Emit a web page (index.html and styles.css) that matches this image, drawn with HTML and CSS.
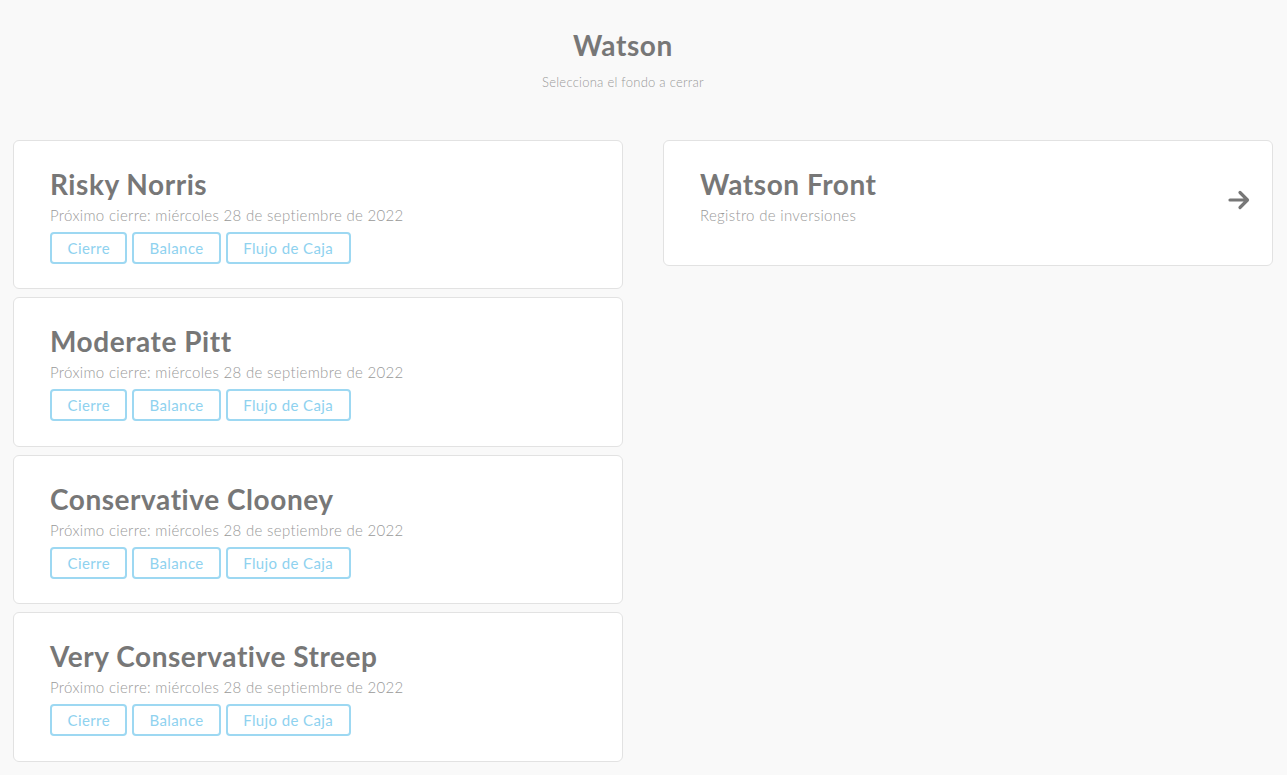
FILE: index.html
```html
<!DOCTYPE html>
<html lang="es">
<head>
<meta charset="utf-8">
<title>Watson</title>
<link rel="stylesheet" href="styles.css">
</head>
<body>
<header class="header">
  <h1 class="header-title">Watson</h1>
  <p class="header-sub">Selecciona el fondo a cerrar</p>
</header>
<main class="grid">
  <section class="column">
    <div class="card">
      <h2 class="card-title">Risky Norris</h2>
      <p class="card-sub">Próximo cierre: miércoles 28 de septiembre de 2022</p>
      <div class="actions">
        <button class="btn">Cierre</button>
        <button class="btn">Balance</button>
        <button class="btn">Flujo de Caja</button>
      </div>
    </div>
    <div class="card">
      <h2 class="card-title">Moderate Pitt</h2>
      <p class="card-sub">Próximo cierre: miércoles 28 de septiembre de 2022</p>
      <div class="actions">
        <button class="btn">Cierre</button>
        <button class="btn">Balance</button>
        <button class="btn">Flujo de Caja</button>
      </div>
    </div>
    <div class="card">
      <h2 class="card-title">Conservative Clooney</h2>
      <p class="card-sub">Próximo cierre: miércoles 28 de septiembre de 2022</p>
      <div class="actions">
        <button class="btn">Cierre</button>
        <button class="btn">Balance</button>
        <button class="btn">Flujo de Caja</button>
      </div>
    </div>
    <div class="card">
      <h2 class="card-title">Very Conservative Streep</h2>
      <p class="card-sub">Próximo cierre: miércoles 28 de septiembre de 2022</p>
      <div class="actions">
        <button class="btn">Cierre</button>
        <button class="btn">Balance</button>
        <button class="btn">Flujo de Caja</button>
      </div>
    </div>
  </section>
  <section class="column">
    <div class="card card-link">
      <div class="card-body">
        <h2 class="card-title">Watson Front</h2>
        <p class="card-sub">Registro de inversiones</p>
      </div>
      <svg class="arrow" width="22" height="22" viewBox="0 0 22 22" aria-hidden="true">
        <path d="M2 11 H19 M12 3.5 L19.5 11 L12 18.5" fill="none" stroke="#777" stroke-width="3.2" stroke-linecap="round" stroke-linejoin="round"/>
      </svg>
    </div>
  </section>
</main>
</body>
</html>
```

FILE: styles.css
```css
* { box-sizing: border-box; }

html, body {
  margin: 0;
  padding: 0;
  background: #f9f9f9;
  font-family: Lato, "Open Sans", "Liberation Sans", sans-serif;
  color: #777;
}

.header {
  text-align: center;
  padding: 29px 41px 0 0;
  height: 140px;
}

.header-title {
  margin: 0;
  font-size: 28px;
  line-height: 1.2;
  font-weight: 700;
  letter-spacing: 0.6px;
  color: #777;
}

.header-sub {
  margin: 11px 0 0;
  font-size: 13px;
  line-height: 16px;
  font-weight: 300;
  letter-spacing: 0.25px;
  color: #999;
}

.grid {
  display: grid;
  grid-template-columns: 610px 610px;
  column-gap: 40px;
  padding: 0 15px 0 13px;
  align-items: start;
}

.column {
  display: flex;
  flex-direction: column;
  gap: 8.4px;
}

.card {
  background: #fff;
  border: 1px solid #e2e2e2;
  border-radius: 6px;
  padding: 27px 36px 24.5px;
}

.card-title {
  margin: 0;
  font-size: 28px;
  line-height: 1.2;
  font-weight: 700;
  letter-spacing: 0.55px;
  color: #777;
}

.card-sub {
  margin: 3px 0 0;
  font-size: 15px;
  line-height: 20px;
  font-weight: 300;
  letter-spacing: 0.32px;
  color: #999;
}

.actions {
  display: flex;
  gap: 4.5px;
  margin-top: 7px;
}

.btn {
  height: 32px;
  padding: 0 15.5px;
  background: #fff;
  border: 2px solid #9dd8f2;
  border-radius: 4px;
  color: #8fd2ef;
  font-family: Lato, "Open Sans", "Liberation Sans", sans-serif;
  font-size: 15px;
  font-weight: 400;
  letter-spacing: 0.4px;
  cursor: pointer;
}

.card-link {
  display: flex;
  align-items: center;
  justify-content: space-between;
  padding: 27px 22px 40px 36px;
}

.arrow {
  flex: none;
  margin-top: 8px;
}
```
